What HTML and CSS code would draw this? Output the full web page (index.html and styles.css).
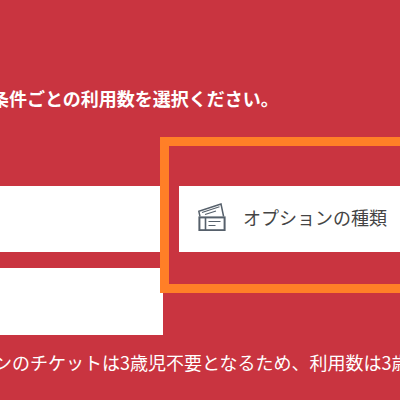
FILE: index.html
```html
<!DOCTYPE html>
<html lang="ja">
<head>
    <meta charset="UTF-8">
    <meta name="viewport" content="width=device-width, initial-scale=1.0">
    <title>オプションの種類</title>
    <link rel="stylesheet" href="styles.css">
</head>
<body>
    <div class="section">
        <p class="lead">条件ごとの利用数を選択ください。</p>
        <div class="options">
            <div class="option"></div>
            <div class="option option-type">
                <svg class="ticket-icon" width="28" height="28" viewBox="0 0 28 28" fill="none" stroke="#56606b" stroke-width="1.5">
                    <path d="M2 13.5 .8 8.2 23 1l2.6 12.5"/>
                    <path d="M4 9.5 21.5 3.8M7 11.5l11-3.5" stroke-width="1.2"/>
                    <rect x="1.4" y="14.4" width="25.2" height="12.8" stroke-width="2"/>
                    <path d="M7.5 14.5v12.5" stroke-width="1.6"/>
                    <path d="M10.5 18.5h12M10.5 22.5h7" stroke-width="1.2"/>
                </svg>
                <span class="option-name">オプションの種類</span>
            </div>
            <div class="option"></div>
        </div>
        <p class="note">ンのチケットは3歳児不要となるため、利用数は3歳</p>
        <div class="highlight"></div>
    </div>
</body>
</html>
```

FILE: styles.css
```css
html, body {
    margin: 0;
    height: 100%;
}
body {
    background-color: #c93440;
    overflow: hidden;
    font-family: "Noto Sans CJK JP", "Noto Sans", sans-serif;
}
.section {
    position: relative;
    height: 400px;
    padding-top: 85px;
    box-sizing: border-box;
}
.lead {
    margin: 0 0 0 -9px;
    font-size: 18px;
    line-height: 26px;
    font-weight: 700;
    color: #fff;
    white-space: nowrap;
}
.options {
    display: grid;
    grid-template-columns: 163px 300px;
    grid-template-rows: 66px 67px;
    gap: 16px;
    margin-top: 75px;
}
.option {
    background-color: #fff;
    display: flex;
    align-items: center;
    padding-left: 19px;
}
.option-name {
    margin-left: 17px;
    margin-bottom: 4px;
    font-size: 18px;
    color: #444;
    white-space: nowrap;
}
.ticket-icon {
    flex: none;
    margin-bottom: 4px;
}
.note {
    margin: 14px 0 0 -6px;
    font-size: 18px;
    line-height: 26px;
    color: #fff;
    white-space: nowrap;
}
.highlight {
    position: absolute;
    left: 160px;
    top: 137px;
    width: 300px;
    height: 156px;
    box-sizing: border-box;
    border: 9.5px solid #ff7f27;
}
```
